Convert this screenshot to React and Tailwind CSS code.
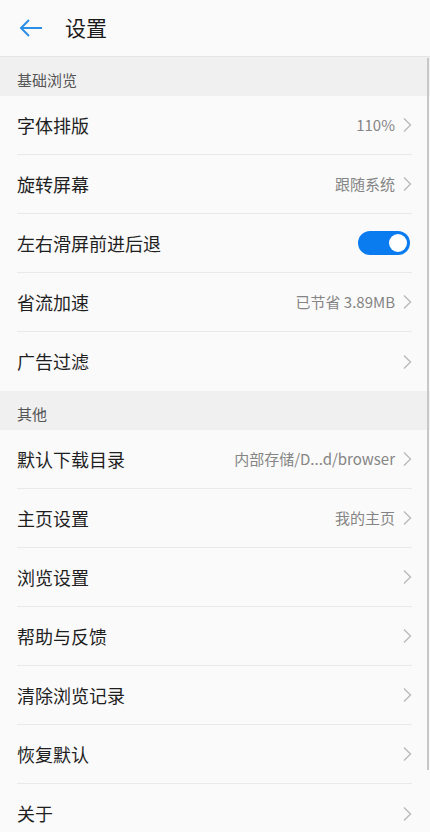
const groups = [
  {
    title: "基础浏览",
    items: [
      { label: "字体排版", value: "110%" },
      { label: "旋转屏幕", value: "跟随系统" },
      { label: "左右滑屏前进后退", toggle: true },
      { label: "省流加速", value: "已节省 3.89MB" },
      { label: "广告过滤" },
    ],
  },
  {
    title: "其他",
    items: [
      { label: "默认下载目录", value: "内部存储/D...d/browser" },
      { label: "主页设置", value: "我的主页" },
      { label: "浏览设置" },
      { label: "帮助与反馈" },
      { label: "清除浏览记录" },
      { label: "恢复默认" },
      { label: "关于" },
    ],
  },
];

const font = { fontFamily: '"Noto Sans CJK SC", "Noto Sans", sans-serif' };

function Chevron() {
  return (
    <svg width="10" height="16" viewBox="0 0 10 16" className="shrink-0">
      <path d="M2 1.5 L8.5 8 L2 14.5" fill="none" stroke="#b8b8b8" strokeWidth="1.3" />
    </svg>
  );
}

function Toggle() {
  return (
    <div className="w-[52px] h-[24px] mr-[2px] rounded-full bg-[#0a7cf0] flex items-center justify-end pr-[3px]">
      <div className="w-[18px] h-[18px] rounded-full bg-white" />
    </div>
  );
}

function Row({ label, value, toggle, last }) {
  return (
    <div className="pl-[17px] pr-[18px]">
      <div
        className={`h-[59px] flex items-center justify-between ${last ? "" : "border-b border-[#e9e9e9]"}`}
      >
        <span className="text-[18px] text-[#1f1f1f]">{label}</span>
        {toggle ? (
          <Toggle />
        ) : (
          <div className="flex items-center gap-[7px]">
            {value && <span className="text-[15px] text-[#858585]">{value}</span>}
            <Chevron />
          </div>
        )}
      </div>
    </div>
  );
}

export default function App() {
  return (
    <div className="w-[430px] h-[832px] overflow-hidden bg-[#fafafa] relative" style={font}>
      {/* Header */}
      <div className="h-[57px] flex items-center pl-[18px] border-b border-[#e4e4e4] shadow-[0_1px_2px_rgba(0,0,0,0.05)]">
        <svg width="26" height="20" viewBox="0 0 26 20">
          <path d="M24 10 H3 M11 2 L3 10 L11 18" fill="none" stroke="#2b8fe6" strokeWidth="2" />
        </svg>
        <span className="ml-[21px] text-[21px] text-[#1a1a1a]">设置</span>
      </div>

      {groups.map((g) => (
        <div key={g.title}>
          <div className="h-[39px] bg-[#f0f0f0] flex items-center pt-[7px] pl-[17px] text-[15px] text-[#555]">
            {g.title}
          </div>
          {g.items.map((it, i) => (
            <Row key={it.label} {...it} last={i === g.items.length - 1} />
          ))}
        </div>
      ))}

      {/* scrollbar */}
      <div className="absolute right-[1px] top-[58px] w-[2px] h-[712px] bg-[#c8c8c8]" />
    </div>
  );
}
